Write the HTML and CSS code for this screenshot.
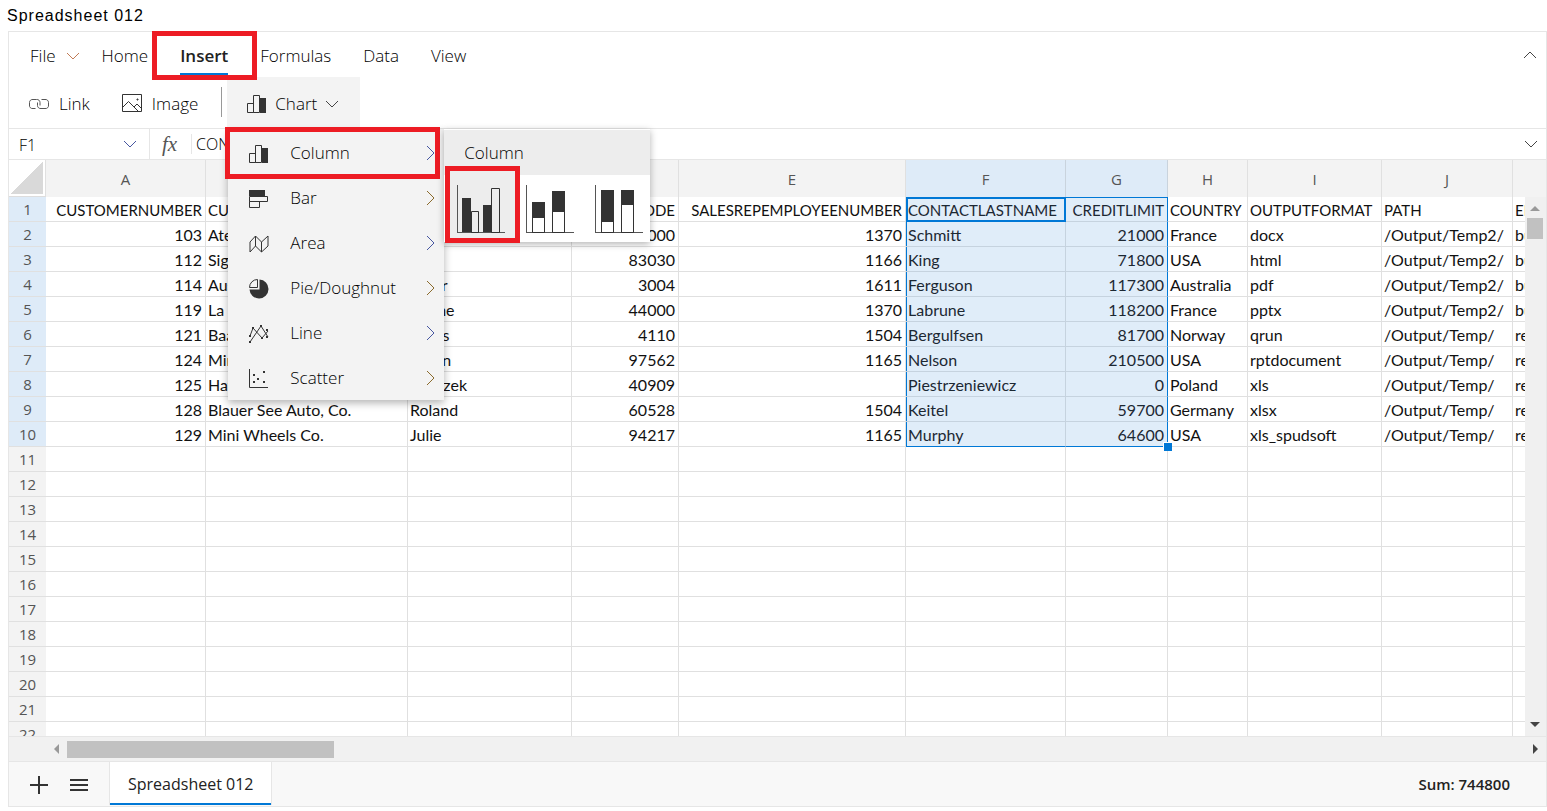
FILE: index.html
```
<!DOCTYPE html>
<html lang="en">
<head>
<meta charset="utf-8">
<title>Spreadsheet 012</title>
<link rel="stylesheet" href="styles.css">
</head>
<body>
<h1 class="title">Spreadsheet 012</h1>
<main class="app">
  <nav class="tabs" aria-label="Ribbon tabs">
    <button class="tab tab-file">File
      <svg class="chev" width="14" height="8" viewBox="0 0 14 8"><path d="M1 1l6 6 6-6"/></svg>
    </button>
    <button class="tab">Home</button>
    <span class="tab-wrap"><button class="tab active">Insert</button><span class="mark mark-tab"></span></span>
    <button class="tab">Formulas</button>
    <button class="tab">Data</button>
    <button class="tab">View</button>
    <button class="icon-btn collapse" aria-label="Collapse ribbon"><svg class="chev dark" width="14" height="8" viewBox="0 0 14 8"><path d="M1 7l6-6 6 6"/></svg></button>
  </nav>

  <div class="toolbar">
    <button class="tool tool-link"><svg class="ico link-ico" width="22" height="12" viewBox="0 0 22 12"><path d="M7.500 10.500H5A3 3 0 0 1 1.500 7V4.500A3 3 0 0 1 5 1.500H8.500A3 3 0 0 1 12 4.500V7.500M13.500 1.500H17A3 3 0 0 1 20.500 4.500V7A3 3 0 0 1 17 10.500H13A3 3 0 0 1 9.500 7.500V4.500"/></svg>Link</button>
    <button class="tool"><svg class="ico" width="21" height="19" viewBox="0 0 21 19"><path d="M.5.5h19v17H.5zM.5 13.500l6-6 10 10M12 13l3-3 5 5"/><path d="M15 5h1v1h-1z"/></svg>Image</button>
    <div class="chart-wrap">
      <button class="tool chart-btn" aria-haspopup="menu" aria-expanded="true">
        <svg class="ico" width="20" height="20" viewBox="0 0 20 20"><path d="M.5 9.500h6v9h-6zM6.500 1.500h6v17h-6z"/><path class="fill" d="M13 4h6v15h-6z"/></svg>
        Chart
        <svg class="chev dark" width="14" height="8" viewBox="0 0 14 8"><path d="M1 1l6 6 6-6"/></svg>
      </button>
      <div class="menu" role="menu">
        <button class="item current" role="menuitem"><svg class="ico" width="20" height="20" viewBox="0 0 20 20"><path d="M.5 9.500h6v9h-6zM6.500 1.500h6v17h-6z"/><path class="fill" d="M13 4h6v15h-6z"/></svg><span>Column</span><svg class="chev blue" width="9" height="16" viewBox="0 0 9 16"><path d="M1 1l7 7-7 7"/></svg></button>
        <button class="item" role="menuitem"><svg class="ico" width="20" height="20" viewBox="0 0 20 20"><path class="fill" d="M0 1h16v6H0z"/><path d="M.5 7.500h18v5H.5zM.5 12.500h10v6H.5z"/></svg><span>Bar</span><svg class="chev gold" width="9" height="16" viewBox="0 0 9 16"><path d="M1 1l7 7-7 7"/></svg></button>
        <button class="item" role="menuitem"><svg class="ico" width="20" height="20" viewBox="0 0 20 20"><path d="M1 18V8l5.500-6 6 6L19 2v10l-6.500 6-6-6zM6.500 2v10M12.500 8v10"/></svg><span>Area</span><svg class="chev blue" width="9" height="16" viewBox="0 0 9 16"><path d="M1 1l7 7-7 7"/></svg></button>
        <button class="item" role="menuitem"><svg class="ico" width="20" height="20" viewBox="0 0 20 20"><path class="fill" d="M10.500.5A9.500 9.500 0 1 1 .5 10.500h10z"/><path d="M.5 8.500A8 8 0 0 1 8.500.5v8z"/></svg><span>Pie/Doughnut</span><svg class="chev gold" width="9" height="16" viewBox="0 0 9 16"><path d="M1 1l7 7-7 7"/></svg></button>
        <button class="item" role="menuitem"><svg class="ico" width="20" height="20" viewBox="0 0 20 20"><path d="M1 12L4 4l9 10 6-7M1 18L12 2l7 11"/><path class="fill" d="M0 11h2v2H0zM3 3h2v2H3zM12 13h2v2h-2zM17 5h2v2h-2zM0 17h2v2H0zM11 1h2v2h-2zM17 12h2v2h-2z"/></svg><span>Line</span><svg class="chev blue" width="9" height="16" viewBox="0 0 9 16"><path d="M1 1l7 7-7 7"/></svg></button>
        <button class="item" role="menuitem"><svg class="ico" width="20" height="20" viewBox="0 0 20 20"><path d="M.5 0v18.500H19"/><path class="fill" d="M4 5h2v2H4zM8 9h2v2H8zM4 12h2v2H4zM14 2h2v2h-2zM14 12h2v2h-2z"/></svg><span>Scatter</span><svg class="chev gold" width="9" height="16" viewBox="0 0 9 16"><path d="M1 1l7 7-7 7"/></svg></button>
        <span class="mark mark-item"></span>
      </div>
      <div class="submenu">
        <div class="submenu-head">Column</div>
        <div class="kinds">
          <button class="kind chosen" aria-label="Clustered column"><svg class="ico" width="49" height="50" viewBox="0 0 49 50"><path class="axis" d="M1.500 1v48M1 48.500h48"/><path class="fill" d="M6 14h9v34H6zM27 21h9v27h-9z"/><path d="M15.500 27.500h7v21h-7zM35.500 4.500h8v44h-8z"/></svg></button>
          <button class="kind" aria-label="Stacked column"><svg class="ico" width="49" height="50" viewBox="0 0 49 50"><path class="axis" d="M1.500 1v48M1 48.500h48"/><path d="M7.500 18.500h12v30h-12zM27.500 7.500h12v41h-12z"/><path class="fill" d="M7 18h13v16H7zM27 7h13v21H27z"/></svg></button>
          <button class="kind" aria-label="100% stacked column"><svg class="ico" width="49" height="50" viewBox="0 0 49 50"><path class="axis" d="M1.500 1v48M1 48.500h48"/><path d="M7.500 6.500h12v42h-12zM27.500 6.500h12v42h-12z"/><path class="fill" d="M7 6h13v32H7zM27 6h13v15H27z"/></svg></button>
        </div>
        <span class="mark mark-kind"></span>
      </div>
    </div>
  </div>

  <div class="formula-bar">
    <label class="name-box"><input class="name-input" aria-label="Name box" value="F1"><svg class="chev blue" width="14" height="8" viewBox="0 0 14 8"><path d="M1 1l6 6 6-6"/></svg></label>
    <span class="fx">fx</span>
    <input class="formula-input" aria-label="Formula" value="CONTACTLASTNAME">
    <button class="icon-btn" aria-label="Expand formula bar"><svg class="chev dark" width="14" height="8" viewBox="0 0 14 8"><path d="M1 1l6 6 6-6"/></svg></button>
  </div>

  <div class="sheet-area">
    <div class="sheet-view">
      <table class="sheet">
        <colgroup><col class="w-row"><col class="w-a"><col class="w-b"><col class="w-c"><col class="w-d"><col class="w-e"><col class="w-f"><col class="w-g"><col class="w-h"><col class="w-i"><col class="w-j"><col class="w-k"></colgroup>
        <thead><tr id="head"></tr></thead>
        <tbody id="body"></tbody>
      </table>
    </div>
    <div class="vscroll"><div class="vtrack"><span class="arrow up"></span><span class="vthumb"></span><span class="arrow down"></span></div></div>
  </div>

  <div class="hscroll"><span class="arrow left"></span><span class="hthumb"></span><span class="arrow right"></span></div>

  <footer class="footer">
    <button class="foot-btn" aria-label="Add sheet"><svg class="ico thick" width="18" height="18" viewBox="0 0 18 18"><path d="M9 0v18M0 9h18"/></svg></button>
    <button class="foot-btn" aria-label="List all sheets"><svg class="ico thick" width="18" height="14" viewBox="0 0 18 14"><path d="M0 2h18M0 7h18M0 12h18"/></svg></button>
    <button class="sheet-tab">Spreadsheet 012</button>
    <span class="sum">Sum: 744800</span>
  </footer>
</main>
<script src="app.js"></script>
</body>
</html>
```
FILE: styles.css
```
* { box-sizing: border-box; }
body { margin: 0; padding: 0 0 4px 8px; height: 100vh; display: flex; flex-direction: column; background: #fff; color: #222; font-family: "Open Sans", "Noto Sans", sans-serif; overflow: hidden; }
button, input { font: inherit; color: inherit; border: 0; background: none; padding: 0; margin: 0; outline: 0; }
svg { flex: none; display: block; }
.title { margin: 0 0 0 -1px; height: 31px; font: 400 16px/31px "Liberation Sans", Arial, sans-serif; letter-spacing: 1px; color: #000; }
.app { flex: 1; min-height: 0; display: flex; flex-direction: column; border: 1px solid #e6e6e6; }

.ico { fill: none; stroke: #333; stroke-width: 1; }
.ico .fill { fill: #333; stroke: none; }
.ico .axis { stroke: #555; }
.link-ico { stroke: #555; }
.thick { stroke-width: 2; }
.chev { fill: none; stroke: #c17b55; stroke-width: 1; }
.chev.dark { stroke: #444; }
.chev.blue { stroke: #4656a0; }
.chev.gold { stroke: #8a6a2c; }
.icon-btn { width: 30px; height: 30px; display: grid; place-items: center; }
.mark { position: absolute; border: 5px solid #ed1c24; pointer-events: none; }

.tabs { display: flex; align-items: flex-start; gap: 32px; height: 45px; padding-left: 21px; font-size: 17px; font-weight: 300; color: #000; }
.tab { height: 43px; padding-top: 4px; display: flex; align-items: center; gap: 10px; }
.tab-file { margin-right: -10px; }
.tab.active { font-weight: 600; color: #222; border-bottom: 2px solid #0078d6; padding-top: 6px; }
.tab-wrap { position: relative; }
.mark-tab { z-index: 1; left: -28px; right: -29px; top: -1px; height: 49px; }
.collapse { margin: 8px 1px 0 auto; }

.toolbar { display: flex; height: 52px; padding-left: 19px; font-size: 17px; font-weight: 300; color: #000; border-bottom: 1px solid #e6e6e6; }
.tool { display: flex; align-items: center; gap: 9px; padding-top: 2px; }
.tool-link { margin-right: 32px; }
.chart-wrap { position: relative; margin-left: 29px; }
.chart-wrap::before { content: ""; position: absolute; left: -6px; top: 10px; height: 30px; border-left: 1px solid #999; }
.chart-btn { width: 133px; height: 51px; padding-left: 20px; gap: 8px; background: #f3f3f3; }
.menu { position: absolute; z-index: 3; left: 1px; top: 53px; width: 216px; background: #f3f3f3; box-shadow: 0 3px 8px rgba(0, 0, 0, .3); }
.item { display: flex; align-items: center; width: 100%; height: 45px; padding: 0 9px 0 21px; }
.item span { flex: 1; padding-left: 21px; text-align: left; }
.item .ico { margin-top: 2px; }
.mark-item { left: -3px; top: -3px; width: 215px; height: 52px; }
.submenu { position: absolute; z-index: 4; left: 217px; top: 52px; width: 206px; background: #fff; border-top: 1px solid #fff; box-shadow: 0 2px 7px rgba(0, 0, 0, .3); }
.submenu-head { height: 45px; line-height: 46px; padding-left: 20px; background: #ededed; }
.kinds { display: flex; height: 67px; padding-left: 2px; }
.kind { flex: none; width: 69px; display: grid; place-items: center; }
.chosen { background: #ededed; }
.mark-kind { left: 1px; top: 36px; width: 75px; height: 77px; }

.formula-bar { display: flex; align-items: center; height: 31px; border-bottom: 1px solid #e6e6e6; font-size: 16px; font-weight: 300; color: #000; }
.name-box { display: flex; align-items: center; width: 141px; height: 30px; padding: 0 12px 0 10px; border-right: 1px solid #e6e6e6; }
.name-input { flex: 1; min-width: 0; padding-top: 2px; }
.fx { width: 42px; padding-left: 12px; border-right: 1px solid #e6e6e6; font: italic 400 21px/20px "Liberation Serif", serif; color: #555; }
.formula-input { flex: 1; min-width: 0; padding-left: 4px; }

.sheet-area { flex: 1; min-height: 0; display: flex; }
.sheet-view { flex: 1; min-width: 0; overflow: hidden; }
.sheet { table-layout: fixed; width: 1664px; border-collapse: separate; border-spacing: 0; font-family: Lato, sans-serif; color: #111; }
.w-row { width: 37px; } .w-a { width: 160px; } .w-b { width: 202px; } .w-c { width: 164px; } .w-d { width: 107px; } .w-e { width: 227px; }
.w-f { width: 160px; } .w-g { width: 102px; } .w-h { width: 80px; } .w-i { width: 134px; } .w-j { width: 131px; } .w-k { width: 160px; }
.sheet th { padding: 0; font: 400 15px/22px "Open Sans", sans-serif; color: #555; background: #f3f3f3; border-right: 1px solid #e0e0e0; }
.sheet thead th { height: 37px; }
.sheet tbody th { height: 25px; border-bottom: 1px solid #e0e0e0; border-right: 0; }
.sheet td { height: 25px; padding: 2px 3px 0 2px; font-size: 16px; line-height: 22px; white-space: nowrap; overflow: hidden; border-right: 1px solid #e0e0e0; border-bottom: 1px solid #e0e0e0; }
.sheet .field { font-size: 15px; }
.sheet .num { text-align: right; }
.sheet .picked { background: #deebf8; border-right-color: #c9d3dd; }
.sheet thead .corner { background: linear-gradient(135deg, transparent 50%, #d9d9d9 50%) 2px 2px / 32px 32px no-repeat, #fff; border-bottom: 1px solid #ddd; }
.sheet .sel { background: #e0edf9; border-color: #c6d3df; color: #1c2833; }
.sheet .sel-left { box-shadow: inset 1px 0 #0078d6; }
.sheet .sel-top { box-shadow: inset 0 1px #0078d6; }
.sheet .sel-right { border-right-color: #0078d6; }
.sheet .sel-bottom { border-bottom-color: #0078d6; }
.sheet .cell-active { box-shadow: inset 2px 2px #0078d6, inset -1px -1px #0078d6; border-color: #0078d6; }
.sheet .corner-cell { position: relative; overflow: visible; }
.handle { position: absolute; right: -5px; bottom: -5px; width: 9px; height: 9px; background: #0078d6; border: solid #fff; border-width: 1px 0 0 1px; z-index: 1; }

.vscroll { width: 21px; padding-top: 37px; background: #f3f3f3; }
.vtrack { height: 100%; display: flex; flex-direction: column; align-items: center; background: #f0f0f0; padding: 9px 1px 9px 0; }
.arrow { border: 5px solid transparent; flex: none; }
.up { border-top: 0; border-bottom-color: #999; }
.down { border-bottom: 0; border-top-color: #444; margin-top: auto; }
.left { border-left: 0; border-right-color: #999; }
.right { border-right: 0; border-left-color: #444; margin-left: auto; }
.vthumb { width: 16px; height: 21px; margin-top: 7px; background: #c1c1c1; }
.hscroll { display: flex; align-items: center; height: 26px; padding: 0 8px 0 45px; background: #f1f1f1; border: solid #e6e6e6; border-width: 1px 0; }
.hthumb { width: 267px; height: 17px; margin-left: 8px; background: #c1c1c1; }

.footer { display: flex; align-items: center; height: 44px; padding: 0 36px 0 10px; background: #f8f8f8; }
.foot-btn { width: 40px; height: 44px; padding-top: 2px; display: grid; place-items: center; }
.sheet-tab { height: 43px; align-self: flex-start; margin-left: 10px; padding: 0 18px; background: #fff; border: solid #e6e6e6; border-width: 0 1px; box-shadow: inset 0 -2px #0078d6; font-size: 16px; }
.sum { margin-left: auto; font-size: 15px; font-weight: 600; }
```
FILE: app.js
```
const columns = "ABCDEFGHIJK".split("");
const numeric = [0, 3, 4, 6];
const rows = [
  ["CUSTOMERNUMBER", "CUSTOMERNAME", "CONTACTFIRSTNAME", "POSTALCODE", "SALESREPEMPLOYEENUMBER", "CONTACTLASTNAME", "CREDITLIMIT", "COUNTRY", "OUTPUTFORMAT", "PATH", "EMAIL"],
  ["103", "Atelier graphique", "Carine", "44000", "1370", "Schmitt", "21000", "France", "docx", "/Output/Temp2/", "burst"],
  ["112", "Signal Gift Stores", "Jean", "83030", "1166", "King", "71800", "USA", "html", "/Output/Temp2/", "burst"],
  ["114", "Australian Collectors", "Peter", "3004", "1611", "Ferguson", "117300", "Australia", "pdf", "/Output/Temp2/", "burst"],
  ["119", "La Rochelle Gifts", "Janine", "44000", "1370", "Labrune", "118200", "France", "pptx", "/Output/Temp2/", "burst"],
  ["121", "Baane Mini Imports", "Jonas", "4110", "1504", "Bergulfsen", "81700", "Norway", "qrun", "/Output/Temp/", "reports"],
  ["124", "Mini Gifts Distributors", "Susan", "97562", "1165", "Nelson", "210500", "USA", "rptdocument", "/Output/Temp/", "reports"],
  ["125", "Havel & Zbyszek Co", "Zbyszek", "40909", "", "Piestrzeniewicz", "0", "Poland", "xls", "/Output/Temp/", "reports"],
  ["128", "Blauer See Auto, Co.", "Roland", "60528", "1504", "Keitel", "59700", "Germany", "xlsx", "/Output/Temp/", "reports"],
  ["129", "Mini Wheels Co.", "Julie", "94217", "1165", "Murphy", "64600", "USA", "xls_spudsoft", "/Output/Temp/", "reports"]
];

function add(parent, tag, text, classes) {
  const el = document.createElement(tag);
  el.textContent = text;
  el.className = classes.filter(Boolean).join(" ");
  parent.append(el);
  return el;
}

const head = document.getElementById("head");
add(head, "th", "", ["corner"]);
columns.forEach((name, c) => add(head, "th", name, [(c === 5 || c === 6) && "picked"]));

const body = document.getElementById("body");
for (let r = 0; r < 22; r++) {
  const tr = document.createElement("tr");
  body.append(tr);
  add(tr, "th", r + 1, [r < 10 && "picked"]);
  columns.forEach((name, c) => {
    const selected = r < 10 && (c === 5 || c === 6);
    const td = add(tr, "td", rows[r] ? rows[r][c] : "", [
      r === 0 && "field",
      numeric.includes(c) && "num",
      selected && "sel",
      selected && c === 5 && "sel-left",
      selected && c === 6 && "sel-right",
      selected && r === 0 && "sel-top",
      selected && r === 9 && "sel-bottom",
      r === 0 && c === 5 && "cell-active",
      r === 9 && c === 6 && "corner-cell"
    ]);
    if (r === 9 && c === 6) add(td, "span", "", ["handle"]);
  });
}
```
